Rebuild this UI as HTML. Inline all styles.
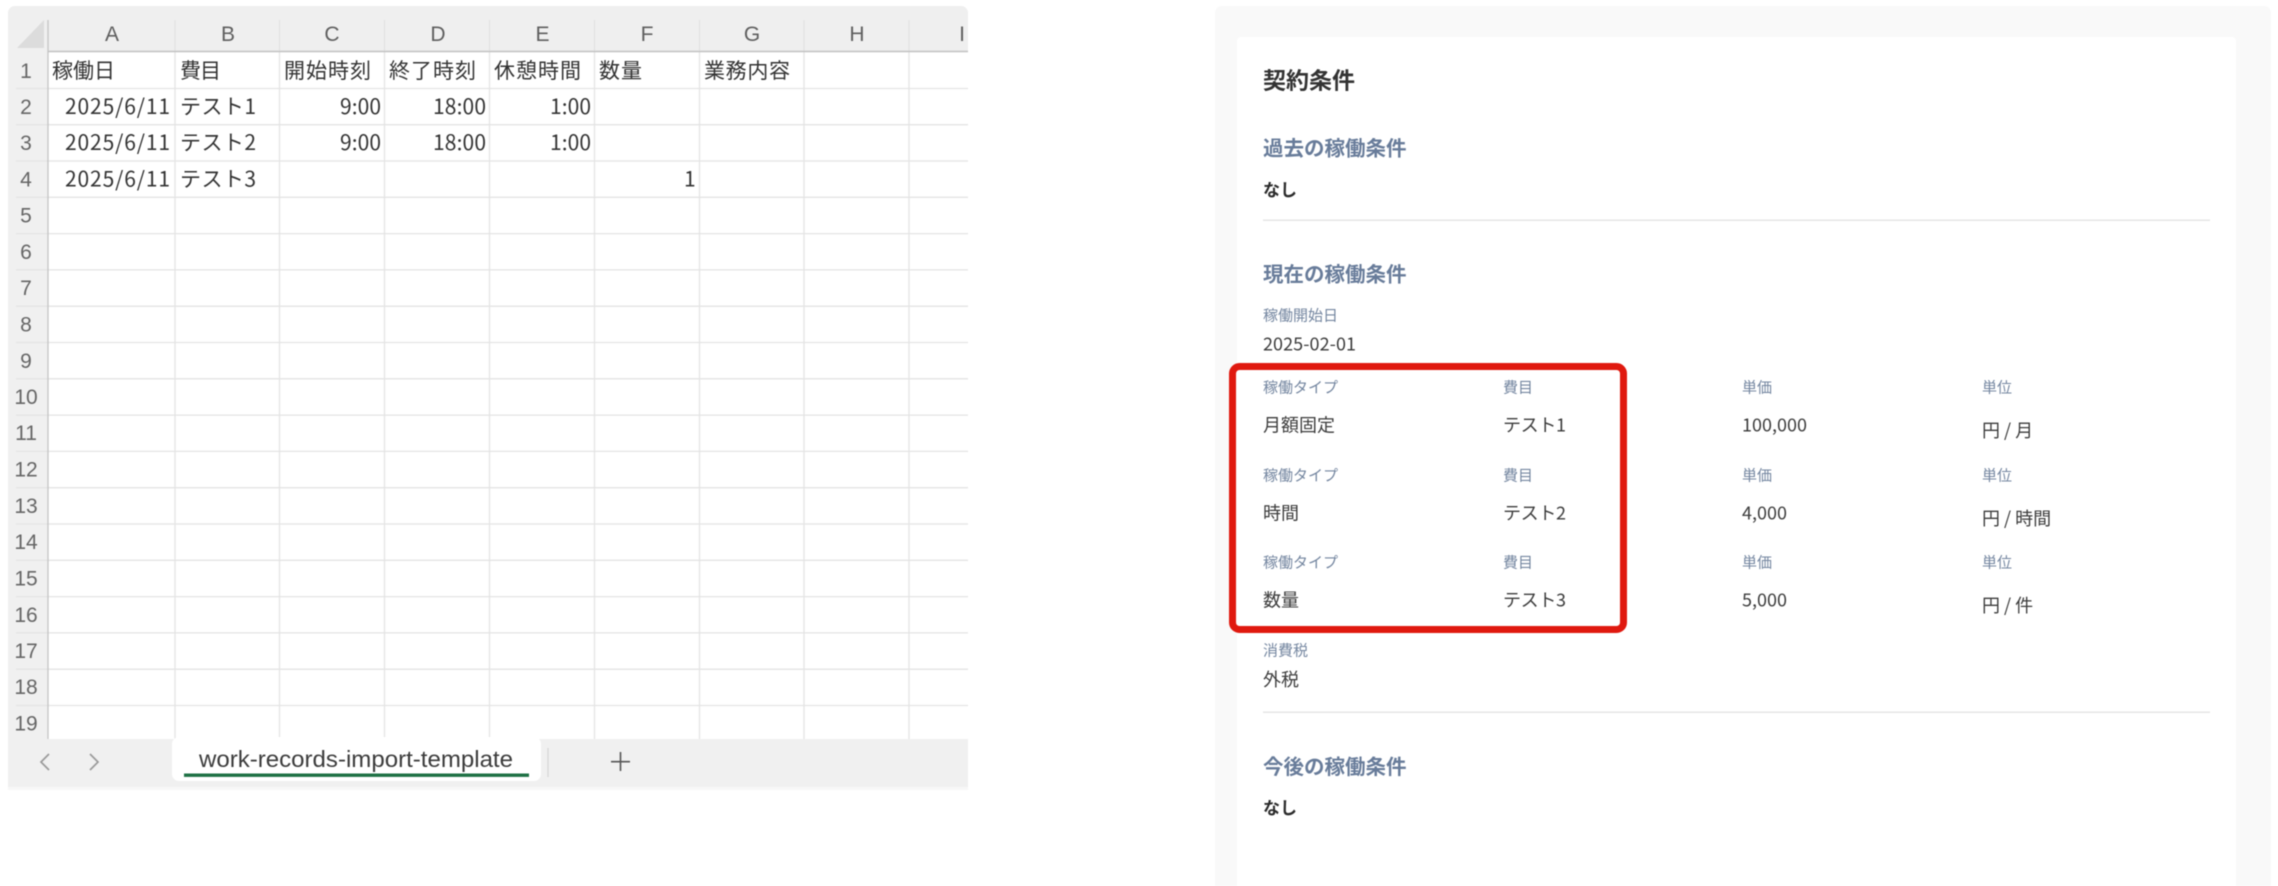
<!DOCTYPE html>
<html lang="ja">
<head>
<meta charset="utf-8">
<title>契約条件</title>
<style>
html,body{margin:0;padding:0;background:#fff;width:2278px;height:886px;overflow:hidden}
svg{display:block;filter:blur(.45px)}
text{font-family:"Liberation Sans","Noto Sans CJK JP",sans-serif}
.jp{font-family:"Noto Sans CJK JP","Liberation Sans",sans-serif}
.c{font-size:21px;fill:#333;font-weight:400}
.h{font-size:21px;fill:#5f5f5f;font-weight:300;text-anchor:middle}
.n{font-size:21px;fill:#666;text-anchor:middle}
.lbl{font-size:15px;fill:#7486a0;font-family:"Noto Sans CJK JP",sans-serif}
.val{font-size:18px;fill:#3c3c3c;font-family:"Noto Sans CJK JP",sans-serif}
.sec{font-size:20.5px;fill:#687c9a;font-weight:700;font-family:"Noto Sans CJK JP",sans-serif}
.b{font-size:17px;fill:#2b2b2b;font-weight:700;font-family:"Noto Sans CJK JP",sans-serif}
</style>
</head>
<body>
<svg width="2278" height="886" viewBox="0 0 2278 886" xmlns="http://www.w3.org/2000/svg">
<rect width="2278" height="886" fill="#fff"/>

<!-- Excel -->
<rect x="8" y="6" width="960" height="60" rx="7" fill="#efefef"/>
<rect x="8" y="30" width="40" height="710" fill="#f0f0f0"/>
<rect x="48" y="52" width="920" height="690" fill="#fff"/>
<path d="M17 48L44 20V48Z" fill="#dcdcdc"/>

<g stroke="#e4e4e4" stroke-width="1.3" fill="none">
<path d="M175 52V740M279.5 52V740M384.5 52V740M489.5 52V740M594.5 52V740M699.5 52V740M804 52V740M909 52V740"/>
<path d="M16 88.5H968M16 124.7H968M16 161H968M16 197.3H968M16 233.6H968M16 269.9H968M16 306.2H968M16 342.5H968M16 378.8H968M16 415.1H968M16 451.4H968M16 487.7H968M16 524H968M16 560.3H968M16 596.6H968M16 632.9H968M16 669.2H968M16 705.5H968"/>
</g>
<g stroke="#e2e2e2" stroke-width="1.2" fill="none">
<path d="M175 20V52M279.5 20V52M384.5 20V52M489.5 20V52M594.5 20V52M699.5 20V52M804 20V52M909 20V52"/>
</g>
<path d="M48 20V740" stroke="#c4c4c4" stroke-width="1.3"/>
<path d="M48 51.5H968" stroke="#c2c2c2" stroke-width="1.6"/>

<!-- column headers -->
<g class="h">
<text class="h" x="112" y="41">A</text>
<text class="h" x="228" y="41">B</text>
<text class="h" x="332" y="41">C</text>
<text class="h" x="438" y="41">D</text>
<text class="h" x="542.5" y="41">E</text>
<text class="h" x="647" y="41">F</text>
<text class="h" x="752" y="41">G</text>
<text class="h" x="857" y="41">H</text>
<text class="h" x="962" y="41">I</text>
</g>

<!-- row headers -->
<text class="n" x="26" y="78">1</text>
<text class="n" x="26" y="114">2</text>
<text class="n" x="26" y="150">3</text>
<text class="n" x="26" y="186.5">4</text>
<text class="n" x="26" y="222.5">5</text>
<text class="n" x="26" y="259">6</text>
<text class="n" x="26" y="295">7</text>
<text class="n" x="26" y="331.5">8</text>
<text class="n" x="26" y="368">9</text>
<text class="n" x="26" y="404">10</text>
<text class="n" x="26" y="440">11</text>
<text class="n" x="26" y="476.5">12</text>
<text class="n" x="26" y="513">13</text>
<text class="n" x="26" y="549">14</text>
<text class="n" x="26" y="585.5">15</text>
<text class="n" x="26" y="622">16</text>
<text class="n" x="26" y="658">17</text>
<text class="n" x="26" y="694">18</text>
<text class="n" x="26" y="730.5">19</text>

<!-- row 1 -->
<g class="jp">
<text class="c jp" x="52" y="78" textLength="63">稼働日</text>
<text class="c jp" x="180" y="78" textLength="41">費目</text>
<text class="c jp" x="284" y="78" textLength="87">開始時刻</text>
<text class="c jp" x="389" y="78" textLength="87">終了時刻</text>
<text class="c jp" x="494" y="78" textLength="87">休憩時間</text>
<text class="c jp" x="599" y="78" textLength="43">数量</text>
<text class="c jp" x="704" y="78" textLength="86">業務内容</text>

<text class="c jp" x="65" y="114" textLength="105">2025/6/11</text>
<text class="c jp" x="180" y="114" textLength="76">テスト1</text>
<text class="c jp" x="340" y="114" textLength="41">9:00</text>
<text class="c jp" x="433" y="114" textLength="53">18:00</text>
<text class="c jp" x="550" y="114" textLength="41">1:00</text>

<text class="c jp" x="65" y="150" textLength="105">2025/6/11</text>
<text class="c jp" x="180" y="150" textLength="76">テスト2</text>
<text class="c jp" x="340" y="150" textLength="41">9:00</text>
<text class="c jp" x="433" y="150" textLength="53">18:00</text>
<text class="c jp" x="550" y="150" textLength="41">1:00</text>

<text class="c jp" x="65" y="186.5" textLength="105">2025/6/11</text>
<text class="c jp" x="180" y="186.5" textLength="76">テスト3</text>
<text class="c jp" x="684" y="186.5">1</text>
</g>

<!-- sheet tabs -->
<path d="M8 739H968V787H8Z" fill="#f0f0f0"/>
<rect x="8" y="787" width="960" height="3" fill="#f7f7f7"/>
<rect x="172" y="737" width="369" height="44" rx="7" fill="#fff"/>
<rect x="184" y="773.5" width="345" height="3.4" fill="#1e7145"/>
<text x="199" y="767" font-size="23px" fill="#3c3c3c" textLength="314" lengthAdjust="spacingAndGlyphs">work-records-import-template</text>
<path d="M548 748V777" stroke="#d4d4d4" stroke-width="1.2"/>
<path d="M49 754L41 762L49 770" stroke="#9a9a9a" stroke-width="1.7" fill="none"/>
<path d="M90 754L98 762L90 770" stroke="#9a9a9a" stroke-width="1.7" fill="none"/>
<path d="M611 761.7H630M620.5 752V771" stroke="#555" stroke-width="1.6" fill="none"/>

<!-- Right panel -->
<path d="M1215 886V13a7 7 0 0 1 7-7H2264a7 7 0 0 1 7 7V886Z" fill="#f9f9f9"/>
<path d="M1237 886V41a4 4 0 0 1 4-4H2232a4 4 0 0 1 4 4V886Z" fill="#fff"/>

<text x="1263" y="88.5" font-size="23px" font-weight="700" fill="#333" class="jp">契約条件</text>
<text class="sec" x="1263" y="155.5">過去の稼働条件</text>
<text class="b" x="1263" y="196">なし</text>
<rect x="1263" y="219.5" width="947" height="1.4" fill="#e4e4e4"/>
<text class="sec" x="1263" y="281.5">現在の稼働条件</text>
<text class="lbl" x="1263" y="320.5">稼働開始日</text>
<text class="val" x="1263" y="350.5" textLength="93">2025-02-01</text>

<text class="lbl" x="1263" y="392.5">稼働タイプ</text>
<text class="lbl" x="1503" y="392.5">費目</text>
<text class="lbl" x="1742" y="392.5">単価</text>
<text class="lbl" x="1982" y="392.5">単位</text>
<text class="val" x="1263" y="431.5">月額固定</text>
<text class="val" x="1503" y="431.5" textLength="63">テスト1</text>
<text class="val" x="1742" y="431.5" textLength="65">100,000</text>
<text class="val" x="1982" y="437">円 / 月</text>

<text class="lbl" x="1263" y="480.5">稼働タイプ</text>
<text class="lbl" x="1503" y="480.5">費目</text>
<text class="lbl" x="1742" y="480.5">単価</text>
<text class="lbl" x="1982" y="480.5">単位</text>
<text class="val" x="1263" y="519.5">時間</text>
<text class="val" x="1503" y="519.5" textLength="63">テスト2</text>
<text class="val" x="1742" y="519.5" textLength="45">4,000</text>
<text class="val" x="1982" y="525">円 / 時間</text>

<text class="lbl" x="1263" y="567.5">稼働タイプ</text>
<text class="lbl" x="1503" y="567.5">費目</text>
<text class="lbl" x="1742" y="567.5">単価</text>
<text class="lbl" x="1982" y="567.5">単位</text>
<text class="val" x="1263" y="606.5">数量</text>
<text class="val" x="1503" y="606.5" textLength="63">テスト3</text>
<text class="val" x="1742" y="606.5" textLength="45">5,000</text>
<text class="val" x="1982" y="612">円 / 件</text>

<rect x="1232.5" y="366.5" width="391" height="263" rx="7" fill="none" stroke="#e0190f" stroke-width="7"/>

<text class="lbl" x="1263" y="655.5">消費税</text>
<text class="val" x="1263" y="686">外税</text>
<rect x="1263" y="711.5" width="947" height="1.4" fill="#e4e4e4"/>
<text class="sec" x="1263" y="774">今後の稼働条件</text>
<text class="b" x="1263" y="814">なし</text>
</svg>
</body>
</html>
